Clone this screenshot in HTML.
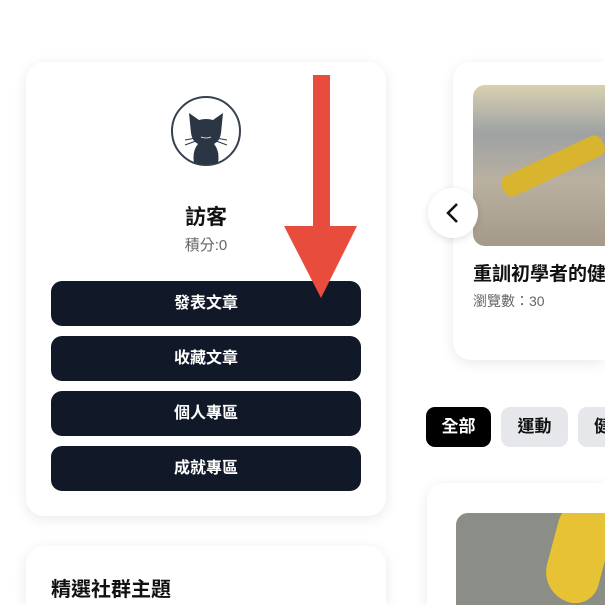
<!DOCTYPE html>
<html><head><meta charset="utf-8"><style>
*{margin:0;padding:0;box-sizing:border-box}
html,body{width:605px;height:605px;overflow:hidden}
body{background:#fff;position:relative;font-family:"Liberation Sans","Noto Sans CJK TC",sans-serif}
.card{position:absolute;background:#fff;border-radius:18px;box-shadow:0 3px 14px rgba(0,0,0,0.09)}
.btn{position:absolute;left:51px;width:310px;height:45px;background:#111827;border-radius:11px;color:#fff;font-weight:bold;font-size:16px;text-align:center;line-height:45px}
.tab{position:absolute;top:407px;height:40px;border-radius:9px;font-size:17px;font-weight:bold;line-height:40px;text-align:center;overflow:hidden;white-space:nowrap}
</style></head><body>
<div class="card" style="left:26px;top:62px;width:360px;height:454px"></div>
<svg style="position:absolute;left:170px;top:95px" width="72" height="72" viewBox="0 0 72 72">
<circle cx="36" cy="36" r="34" fill="#fff" stroke="#374151" stroke-width="2"/>
<path d="M21 38 L19 18 L29 25 Q36 23 43 25 L53 18 L51 38 Q50 46 44 49 Q50 56 48 68 Q36 71 24 68 Q22 56 28 49 Q22 46 21 38Z" fill="#2b3644"/>
<path d="M15 45 L26 43 M15 50 L26 46 M57 45 L46 43 M57 50 L46 46" stroke="#2b3644" stroke-width="1"/>
<path d="M31 42 Q36 44 41 42" stroke="#fff" stroke-width="0.8" fill="none"/>
</svg>
<div style="position:absolute;left:26px;width:360px;top:201px;text-align:center;font-size:21px;font-weight:bold;color:#111">訪客</div>
<div style="position:absolute;left:26px;width:360px;top:234px;text-align:center;font-size:15px;color:#666">積分:0</div>
<div class="btn" style="top:281px">發表文章</div>
<div class="btn" style="top:336px">收藏文章</div>
<div class="btn" style="top:391px">個人專區</div>
<div class="btn" style="top:446px">成就專區</div>
<div class="card" style="left:26px;top:546px;width:360px;height:59px;border-radius:18px 18px 0 0"></div>
<div style="position:absolute;left:51px;top:573px;font-size:20px;font-weight:bold;color:#111">精選社群主題</div>
<div class="card" style="left:453px;top:62px;width:152px;height:298px;border-radius:18px 0 0 18px"></div>
<div style="position:absolute;left:473px;top:85px;width:132px;height:161px;border-radius:12px 0 0 12px;overflow:hidden;background:linear-gradient(180deg,#d8d0b0 0%,#9ea2a3 30%,#b9b0a0 60%,#a59a88 100%)">
<div style="position:absolute;left:25px;top:70px;width:110px;height:22px;background:#d9b42e;transform:rotate(-25deg);border-radius:8px"></div>
</div>
<div style="position:absolute;left:473px;top:259px;width:132px;overflow:hidden;font-size:19px;font-weight:bold;color:#111;white-space:nowrap">重訓初學者的健</div>
<div style="position:absolute;left:473px;top:291px;font-size:14px;color:#666">瀏覽數：30</div>
<div style="position:absolute;left:428px;top:188px;width:50px;height:50px;border-radius:50%;background:#fff;box-shadow:0 2px 8px rgba(0,0,0,0.12)"></div>
<svg style="position:absolute;left:443px;top:202px" width="20" height="22"><path d="M14 2 L5 11 L14 20" stroke="#111" stroke-width="2.5" fill="none"/></svg>
<div class="tab" style="left:426px;width:65px;background:#000;color:#fff">全部</div>
<div class="tab" style="left:501px;width:67px;background:#e5e7eb;color:#111">運動</div>
<div class="tab" style="left:578px;width:27px;background:#e5e7eb;color:#111;border-radius:9px 0 0 9px;text-align:left;padding-left:16px">健康</div>
<div class="card" style="left:427px;top:483px;width:178px;height:122px;border-radius:18px 0 0 0"></div>
<div style="position:absolute;left:456px;top:513px;width:149px;height:92px;border-radius:12px 0 0 0;background:#8b8e87;overflow:hidden">
<div style="position:absolute;left:95px;top:-10px;width:55px;height:100px;background:#e6c234;border-radius:30px 20px 30px 40px;transform:rotate(15deg)"></div>
</div>
<svg style="position:absolute;left:0;top:0" width="605" height="605"><path d="M313 75 H330 V226 H357 L321 298 L284 226 H313 Z" fill="#e84c3d"/></svg>
</body></html>
